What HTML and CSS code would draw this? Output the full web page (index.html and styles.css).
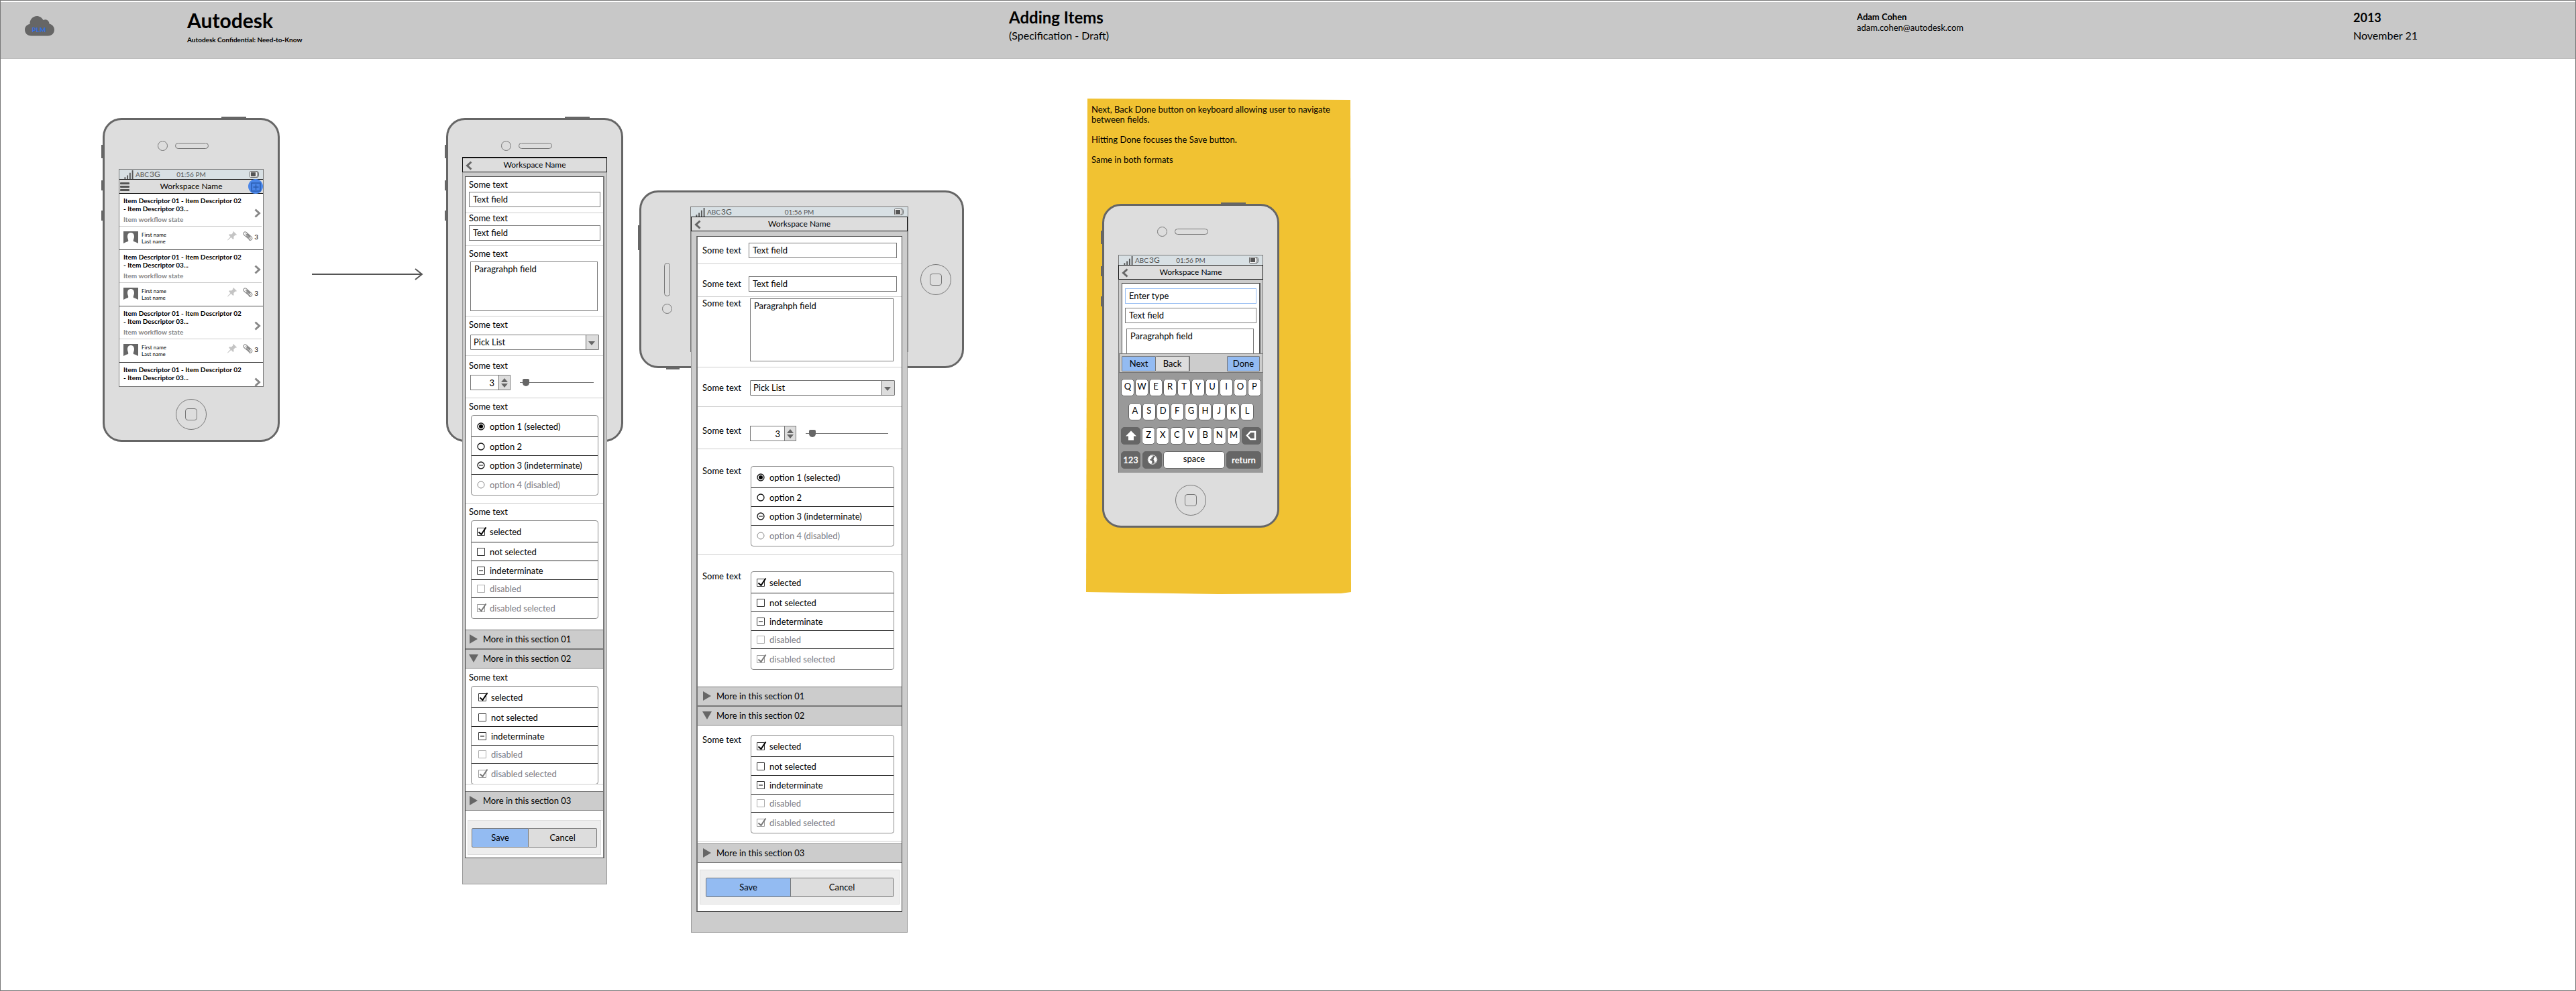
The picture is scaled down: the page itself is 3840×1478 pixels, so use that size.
FILE: index.html
```html
<!DOCTYPE html>
<html lang="en">
<head>
<meta charset="utf-8">
<title>Adding Items</title>
<link rel="stylesheet" href="styles.css">
</head>
<body>
<svg class="defs" aria-hidden="true">
  <symbol id="signal" viewBox="0 0 16 15"><path d="M1 12h2v3H1zM5 9h2v6H5zM9 5h2v10H9zM13 1h2v14h-2z" fill="#555"/></symbol>
  <symbol id="battery" viewBox="0 0 14 10"><path d="M1.500.5h7.500a3 4.500 0 0 1 0 9h-7.500a1 1 0 0 1-1-1v-7a1 1 0 0 1 1-1z" fill="#eee" stroke="#666"/><path d="M10 .5h1a2.500 4.500 0 0 1 0 9h-1" fill="none" stroke="#666"/><path d="M2 2h7v6H2z" fill="#555"/></symbol>
  <symbol id="back" viewBox="0 0 10 14"><path d="M8.500 1.500 2.500 7l6 5.500" fill="none" stroke="#666" stroke-width="3"/></symbol>
  <symbol id="next" viewBox="0 0 10 14"><path d="M1.500 1.500 7.500 7l-6 5.500" fill="none" stroke="#888" stroke-width="3"/></symbol>
  <symbol id="avatar" viewBox="0 0 22 18"><path d="M0 0h22v18l-4-2-3-1c-1-2 1-4 1-7 0-4-2-6-5-6S6 4 6 8c0 3 2 5 1 7l-3 1-4 2z" fill="#666"/></symbol>
  <symbol id="pin" viewBox="0 0 14 14"><path d="M9 0l5 5-1 .8-1.300-.3-2.400 2.600.2 2.900-1.200 1L5.500 9 .5 13.500 0 13l4.500-5L2 5.500l1-1.200 3 .2 2.500-2.400L8 1z" fill="#c4c4c4"/></symbol>
  <symbol id="clip" viewBox="0 0 15 14"><path d="M4 3.500l6.500 5.500c1.600 1.400-.3 3.500-1.900 2.200L2 5.500C-.6 3.200 2.400-.6 5.100 1.500l7.400 6.300c3.300 3-.4 7-3.500 4.700M5.200 6.500l4 3.500M6 3.700l5 4.300" fill="none" stroke="#888" stroke-width="1.100"/></symbol>
  <symbol id="closed" viewBox="0 0 14 14"><path d="M1 0l12 7-12 7z" fill="#666"/></symbol>
  <symbol id="open" viewBox="0 0 14 14"><path d="M0 1h14L7 13z" fill="#666"/></symbol>
  <symbol id="steps" viewBox="0 0 10 14"><path d="M5 0l5 6H0zM5 14l5-6H0z" fill="#666"/></symbol>
</svg>

<header class="banner">
  <svg class="logo" viewBox="0 0 44 30" role="img" aria-label="PLM cloud">
    <path d="M10 29.500C4 29.500 0 25.500 0 20.500c0-4.500 3-8 7.500-8.500C7 5 12 0 18 0c4 0 7.500 2.300 9.500 6 4-2.300 9 .5 9 5.500 4.500 1 7.500 4.500 7.500 9 0 5-4 9-9.500 9z" fill="#666"/>
    <text x="21" y="24" text-anchor="middle" class="logo-text">PLM</text>
  </svg>
  <div>
    <p class="brand">Autodesk</p>
    <p class="confidential">Autodesk Confidential: Need-to-Know</p>
  </div>
  <div>
    <h1 class="title">Adding Items</h1>
    <p class="subtitle">(Specification - Draft)</p>
  </div>
  <div class="author">
    <p class="name">Adam Cohen</p>
    <p>adam.cohen@autodesk.com</p>
  </div>
  <div>
    <p class="year">2013</p>
    <p class="subtitle">November 21</p>
  </div>
</header>

<main class="board">
  <section class="phone phone-list">
    <div class="ear"><i class="camera"></i><i class="speaker"></i></div>
    <div class="screen">
      <div class="status"><span class="carrier"><svg class="signal"><use href="#signal"/></svg>ABC<b class="net">3G</b></span><span>01:56 PM</span><svg class="battery"><use href="#battery"/></svg></div>
      <div class="bar">
        <button class="menu" aria-label="Menu"><i></i><i></i><i></i></button>
        <h2 class="bar-title">Workspace Name</h2>
        <button class="add" aria-label="Add item"><svg viewBox="0 0 22 22"><circle cx="11" cy="11" r="11" fill="#4a86e8"/><path d="M5 6h13v12H5zM11.500 8v8M7.500 12h8" fill="none" stroke="#2a5cae" stroke-width="1.500"/></svg></button>
      </div>
      <ul class="items">
        <li class="item">
          <div class="item-head"><div><h3 class="item-title">Item Descriptor 01 - Item Descriptor 02<br>- Item Descriptor 03...</h3><p class="state">Item workflow state</p></div><svg class="chev"><use href="#next"/></svg></div>
          <div class="item-foot"><svg class="avatar"><use href="#avatar"/></svg><p class="person">First name<br>Last name</p><svg class="pin"><use href="#pin"/></svg><svg class="clip"><use href="#clip"/></svg><span class="count">3</span></div>
        </li>
        <li class="item">
          <div class="item-head"><div><h3 class="item-title">Item Descriptor 01 - Item Descriptor 02<br>- Item Descriptor 03...</h3><p class="state">Item workflow state</p></div><svg class="chev"><use href="#next"/></svg></div>
          <div class="item-foot"><svg class="avatar"><use href="#avatar"/></svg><p class="person">First name<br>Last name</p><svg class="pin"><use href="#pin"/></svg><svg class="clip"><use href="#clip"/></svg><span class="count">3</span></div>
        </li>
        <li class="item">
          <div class="item-head"><div><h3 class="item-title">Item Descriptor 01 - Item Descriptor 02<br>- Item Descriptor 03...</h3><p class="state">Item workflow state</p></div><svg class="chev"><use href="#next"/></svg></div>
          <div class="item-foot"><svg class="avatar"><use href="#avatar"/></svg><p class="person">First name<br>Last name</p><svg class="pin"><use href="#pin"/></svg><svg class="clip"><use href="#clip"/></svg><span class="count">3</span></div>
        </li>
        <li class="item">
          <div class="item-head"><div><h3 class="item-title">Item Descriptor 01 - Item Descriptor 02<br>- Item Descriptor 03...</h3></div><svg class="chev"><use href="#next"/></svg></div>
        </li>
      </ul>
    </div>
    <div class="home"></div>
    <i class="side power"></i><i class="side mute"></i><i class="side up"></i><i class="side down"></i>
  </section>

  <svg class="arrow" viewBox="0 0 166 18" aria-hidden="true"><path d="M0 9h164M154 1l10 8-10 8" fill="none" stroke="#555" stroke-width="2"/></svg>

  <section class="phone phone-form">
    <div class="ear"><i class="camera"></i><i class="speaker"></i></div>
    <div class="panel">
      <div class="bar"><button class="back" aria-label="Back"><svg><use href="#back"/></svg></button><h2 class="bar-title">Workspace Name</h2></div>
      <form class="card">
        <div class="field first"><label for="p1">Some text</label><input class="text" id="p1" value="Text field"></div>
        <div class="field second"><label for="p2">Some text</label><input class="text" id="p2" value="Text field"></div>
        <div class="field para"><label for="p3">Some text</label><textarea class="area" id="p3">Paragrahph field</textarea></div>
        <div class="field pick"><label for="p4">Some text</label><select class="select" id="p4"><option>Pick List</option></select></div>
        <div class="field amount"><label for="p5">Some text</label><div class="number"><input type="text" inputmode="numeric" class="spin" id="p5" value="3"><button type="button" class="step" aria-label="Step"><svg><use href="#steps"/></svg></button><input type="range" class="range" value="4" aria-label="Amount"></div></div>
        <div class="field radios"><span>Some text</span>
          <div class="group">
            <label><input type="radio" name="pr" checked>option 1 (selected)</label>
            <label><input type="radio" name="pr">option 2</label>
            <label><input type="radio" name="pr" class="mixed">option 3 (indeterminate)</label>
            <label class="off"><input type="radio" name="pr" disabled>option 4 (disabled)</label>
          </div></div>
        <div class="field checks"><span>Some text</span>
          <div class="group">
            <label><input type="checkbox" checked>selected</label>
            <label><input type="checkbox">not selected</label>
            <label><input type="checkbox" class="mixed">indeterminate</label>
            <label class="off"><input type="checkbox" disabled>disabled</label>
            <label class="off"><input type="checkbox" checked disabled>disabled selected</label>
          </div></div>
        <button type="button" class="section"><svg><use href="#closed"/></svg>More in this section 01</button>
        <button type="button" class="section"><svg><use href="#open"/></svg>More in this section 02</button>
        <div class="field more"><span>Some text</span>
          <div class="group inset">
            <label><input type="checkbox" checked>selected</label>
            <label><input type="checkbox">not selected</label>
            <label><input type="checkbox" class="mixed">indeterminate</label>
            <label class="off"><input type="checkbox" disabled>disabled</label>
            <label class="off"><input type="checkbox" checked disabled>disabled selected</label>
          </div></div>
        <button type="button" class="section"><svg><use href="#closed"/></svg>More in this section 03</button>
        <div class="actions"><button type="button" class="save">Save</button><button type="button" class="cancel">Cancel</button></div>
      </form>
    </div>
    <i class="side power"></i><i class="side mute"></i><i class="side up"></i><i class="side down"></i>
  </section>

  <section class="phone landscape">
    <div class="ear"><i class="speaker"></i><i class="camera"></i></div>
    <div class="screen">
      <div class="status"><span class="carrier"><svg class="signal"><use href="#signal"/></svg>ABC<b class="net">3G</b></span><span>01:56 PM</span><svg class="battery"><use href="#battery"/></svg></div>
      <div class="panel">
        <div class="bar"><button class="back" aria-label="Back"><svg><use href="#back"/></svg></button><h2 class="bar-title">Workspace Name</h2></div>
        <form class="card">
          <div class="field first"><label for="w1">Some text</label><input class="text" id="w1" value="Text field"></div>
          <div class="field second"><label for="w2">Some text</label><input class="text" id="w2" value="Text field"></div>
          <div class="field para"><label for="w3">Some text</label><textarea class="area" id="w3">Paragrahph field</textarea></div>
          <div class="field pick"><label for="w4">Some text</label><select class="select" id="w4"><option>Pick List</option></select></div>
          <div class="field amount"><label for="w5">Some text</label><div class="number"><input type="text" inputmode="numeric" class="spin" id="w5" value="3"><button type="button" class="step" aria-label="Step"><svg><use href="#steps"/></svg></button><input type="range" class="range" value="4" aria-label="Amount"></div></div>
          <div class="field radios"><span>Some text</span>
            <div class="group">
              <label><input type="radio" name="wr" checked>option 1 (selected)</label>
              <label><input type="radio" name="wr">option 2</label>
              <label><input type="radio" name="wr" class="mixed">option 3 (indeterminate)</label>
              <label class="off"><input type="radio" name="wr" disabled>option 4 (disabled)</label>
            </div></div>
          <div class="field checks"><span>Some text</span>
            <div class="group">
              <label><input type="checkbox" checked>selected</label>
              <label><input type="checkbox">not selected</label>
              <label><input type="checkbox" class="mixed">indeterminate</label>
              <label class="off"><input type="checkbox" disabled>disabled</label>
              <label class="off"><input type="checkbox" checked disabled>disabled selected</label>
            </div></div>
          <button type="button" class="section"><svg><use href="#closed"/></svg>More in this section 01</button>
          <button type="button" class="section"><svg><use href="#open"/></svg>More in this section 02</button>
          <div class="field more"><span>Some text</span>
            <div class="group">
              <label><input type="checkbox" checked>selected</label>
              <label><input type="checkbox">not selected</label>
              <label><input type="checkbox" class="mixed">indeterminate</label>
              <label class="off"><input type="checkbox" disabled>disabled</label>
              <label class="off"><input type="checkbox" checked disabled>disabled selected</label>
            </div></div>
          <button type="button" class="section"><svg><use href="#closed"/></svg>More in this section 03</button>
          <div class="actions"><button type="button" class="save">Save</button><button type="button" class="cancel">Cancel</button></div>
        </form>
      </div>
    </div>
    <div class="home"></div>
    <i class="side l-power"></i><i class="side l-mute"></i>
  </section>

  <aside class="sticky">
    <p>Next, Back Done button on keyboard allowing user to navigate between fields.</p>
    <p>Hitting Done focuses the Save button.</p>
    <p>Same in both formats</p>
    <section class="phone phone-keys">
      <div class="ear"><i class="camera"></i><i class="speaker"></i></div>
      <div class="screen">
        <div class="status"><span class="carrier"><svg class="signal"><use href="#signal"/></svg>ABC<b class="net">3G</b></span><span>01:56 PM</span><svg class="battery"><use href="#battery"/></svg></div>
        <div class="bar"><button class="back" aria-label="Back"><svg><use href="#back"/></svg></button><h2 class="bar-title">Workspace Name</h2></div>
        <form class="mini">
          <div class="mini-card">
            <input class="text focus" value="Enter type" aria-label="Type">
            <input class="text" value="Text field" aria-label="Text">
            <textarea class="area" aria-label="Paragraph">Paragrahph field</textarea>
          </div>
        </form>
        <div class="tools"><button class="save">Next</button><button class="cancel">Back</button><button class="save done">Done</button></div>
        <div class="keys">
          <div class="row"><button>Q</button><button>W</button><button>E</button><button>R</button><button>T</button><button>Y</button><button>U</button><button>I</button><button>O</button><button>P</button></div>
          <div class="row mid"><button>A</button><button>S</button><button>D</button><button>F</button><button>G</button><button>H</button><button>J</button><button>K</button><button>L</button></div>
          <div class="row"><button class="dark" aria-label="Shift"><svg viewBox="0 0 16 14"><path d="M8 0l8 8h-4v6H4V8H0z" fill="#fff"/></svg></button><button>Z</button><button>X</button><button>C</button><button>V</button><button>B</button><button>N</button><button>M</button><button class="dark" aria-label="Delete"><svg viewBox="0 0 16 14"><path d="M14 1.500H7L2 7l5 5.500h7z" fill="none" stroke="#fff" stroke-width="2.500"/></svg></button></div>
          <div class="row"><button class="dark">123</button><button class="dark" aria-label="Language"><svg viewBox="0 0 16 16"><circle cx="8" cy="8" r="7.200" fill="#666" stroke="#fff"/><path d="M2 4.500L5 1.500h4l-1 2.500-2 1 .5 2h-2l-1 1.500 3.500 1.500.5 2-1.500 3-3-1.500L1.500 9zM9.500 8l1-3.500 2-1 1.500 2 .5 3.500-2 3.500-1.700.5.200-3z" fill="#fff"/></svg></button><button class="space">space</button><button class="dark return">return</button></div>
        </div>
      </div>
      <div class="home"></div>
      <i class="side power"></i><i class="side mute"></i><i class="side up"></i><i class="side down"></i>
    </section>
  </aside>
</main>
</body>
</html>
```
FILE: styles.css
```css
* { box-sizing: border-box; margin: 0; padding: 0; }

body {
  display: flex;
  flex-direction: column;
  min-height: 100vh;
  border: 1px solid #777;
  background: #fff;
  color: #000;
  font: 13px/16px Lato, "Liberation Sans", sans-serif;
}

button, input, select, textarea { font: inherit; color: inherit; border-radius: 0; }
button { border: 0; background: none; }
svg { display: block; flex: none; }
i { display: block; }
ul { list-style: none; }
.defs { position: absolute; width: 0; height: 0; }

/* Banner */
.banner {
  display: grid;
  grid-template-columns: 278px 1225fr 1264fr 740fr 331fr;
  height: 85px;
  margin-top: 2px;
  padding-top: 12px;
  border-bottom: 1px solid #bbb;
  background: #c8c8c8;
}
.logo { width: 44px; height: 30px; margin: 9px 0 0 36px; }
.logo-text { font: 700 10px Lato, sans-serif; fill: #2f6fe4; }
.brand { font-size: 30px; line-height: 30px; font-weight: 700; }
.confidential { margin-top: 8px; font-size: 10px; line-height: 12px; font-weight: 700; }
.title { font-size: 24px; line-height: 22px; }
.subtitle { font-size: 16px; line-height: 20px; margin-top: 6px; }
.author { padding-top: 2px; }
.name { font-weight: 700; }
.year { font-size: 18px; line-height: 22px; font-weight: 700; }

/* Board */
.board { flex: 1; display: flex; align-items: flex-start; padding-left: 152px; }

.phone {
  position: relative;
  flex: none;
  display: flex;
  flex-direction: column;
  align-items: center;
  width: 264px;
  height: 483px;
  margin-top: 88px;
  border: 3px solid #666;
  border-radius: 28px;
  background: #ddd;
}
.ear { display: flex; align-items: center; align-self: flex-start; gap: 11px; margin: 31px 0 0 79px; }
.camera { width: 15px; height: 15px; border: 1px solid #777; border-radius: 50%; }
.speaker { width: 50px; height: 9px; border: 1px solid #777; border-radius: 5px; }
.home {
  display: flex;
  flex: none;
  width: 46px;
  height: 46px;
  margin-top: 18px;
  border: 1px solid #777;
  border-radius: 50%;
}
.home::before { content: ""; width: 16px; height: 16px; margin: auto; border: 1px solid #777; border-radius: 4px; }
.side { position: absolute; left: -5px; width: 3px; background: #666; }
.power { top: -5px; left: 174px; width: 37px; height: 3px; }
.mute { top: 37px; height: 20px; }
.up { top: 90px; height: 15px; }
.down { top: 135px; height: 15px; }
.l-power { top: 49px; height: 37px; }
.l-mute { left: 37px; bottom: -5px; width: 20px; height: 3px; }

.screen { width: 216px; height: 325px; flex: none; margin-top: 27px; border: 1px solid #777; }
.status {
  display: grid;
  grid-template-columns: 1fr auto 1fr;
  align-items: center;
  height: 14px;
  padding: 0 6px;
  background: #d8e0e4;
  color: #555;
  font-size: 10px;
  line-height: 14px;
}
.carrier { display: flex; }
.signal { width: 16px; height: 14px; margin-right: 2px; }
.net { margin-left: 1px; font-size: 12px; font-weight: 400; }
.battery { width: 14px; height: 10px; justify-self: end; }

.bar {
  position: relative;
  display: flex;
  align-items: center;
  height: 22px;
  border: 1px solid #111;
  background: #ddd;
}
.bar-title { flex: 1; text-align: center; font-size: 12px; line-height: 20px; font-weight: 400; }
.back { position: absolute; left: 4px; top: 4px; }
.back svg { width: 10px; height: 14px; }
.menu { position: absolute; left: 1px; top: 4px; display: grid; gap: 2px; }
.menu i { width: 14px; height: 3px; border-radius: 1px; background: #555; }
.add { position: absolute; right: 0; top: -1px; }
.add svg { width: 22px; height: 22px; }

.arrow { width: 166px; height: 18px; margin: 312px 0 0 48px; }
.phone-form { margin-left: 34px; }
.landscape { margin-left: 24px; }
.sticky { margin-left: 182px; }

/* Item list */
.phone-list .screen { overflow: hidden; background: #fff; }
.phone-list .bar { margin: 0 -1px; }
.item { height: 84px; border-bottom: 1px solid #444; }
.item-head { display: flex; height: 49px; margin-right: 2px; padding: 4px 1px 0 6px; border-bottom: 1px solid #ccc; }
.item:last-child .item-head { border: 0; }
.item-head div { flex: 1; }
.item-title { font-size: 10px; line-height: 12px; white-space: nowrap; }
.state { margin-top: 3px; font-size: 10px; line-height: 14px; font-weight: 700; color: #888; }
.chev { width: 10px; height: 14px; margin-top: 18px; }
.item-foot { display: flex; align-items: flex-start; padding: 7px 7px 0 6px; }
.avatar { width: 22px; height: 18px; }
.person { flex: 1; margin-left: 5px; font-size: 8px; line-height: 10px; }
.pin { width: 14px; height: 14px; margin-right: 9px; }
.clip { width: 15px; height: 14px; }
.count { margin-left: 2px; font-size: 10px; line-height: 16px; }

/* Form */
.panel { width: 216px; flex: none; border: 1px solid #999; border-top: 0; background: #ccc; padding-bottom: 38px; }
.phone-form .panel { margin-top: 9px; }
.panel .bar { height: 23px; margin: 0 -1px; }
.phone-form .bar { border-top-width: 2px; }
.card { display: flex; flex-direction: column; margin: 6px 3px 0; border: 1px solid #444; border-right: 2px solid #777; background: #fff; }
.field { position: relative; display: grid; justify-items: start; padding: 0 0 0 5px; border-bottom: 1px solid #ccc; }
.field > label, .field > span { padding-bottom: 2px; line-height: 14px; }
.text { width: 196px; height: 23px; padding: 0 5px 1px; border: 1px solid #777; background: #fff; outline: 0; }
.area { width: 190px; height: 74px; margin-left: 2px; padding: 2px 5px; border: 1px solid #777; background: #fff; resize: none; display: block; }
.select {
  width: 192px;
  height: 23px;
  margin-left: 2px;
  padding: 0 4px 1px;
  border: 1px solid #777;
  border-radius: 1px;
  appearance: none;
  background: #fff url("data:image/svg+xml,%3Csvg xmlns='http://www.w3.org/2000/svg' width='19' height='21'%3E%3Cpath d='M0 0h19v21H0z' fill='%23ddd'/%3E%3Cpath d='M0 0h1v21H0zM4 9h10l-5 6z' fill='%23666'/%3E%3C/svg%3E") no-repeat right center;
}
.number { display: flex; align-items: center; margin-left: 2px; }
.spin { width: 43px; height: 23px; padding-right: 6px; border: 1px solid #777; text-align: right; }
.step { display: flex; align-items: center; justify-content: center; width: 18px; height: 23px; margin-left: -1px; border: 1px solid #777; background: #ddd; }
.step svg { width: 10px; height: 14px; }
.range { width: 110px; height: 12px; margin-left: 14px; appearance: none; background: linear-gradient(#777, #777) no-repeat center / 100% 1px; }
.range::-webkit-slider-thumb { appearance: none; width: 10px; height: 11px; border-radius: 2px 2px 5px 5px; background: #666; }

.group { width: 190px; margin-left: 3px; border: 1px solid #888; border-radius: 4px; background: #fff; }
.group label { display: flex; align-items: center; gap: 4px; height: 28px; padding-left: 8px; border-bottom: 1px solid #222; }
.group label:first-child { height: 32px; }
.group label:nth-child(4) { height: 27px; }
.group label:last-child { height: 30px; border: 0; }
.group.inset label { padding-left: 10px; }
.group .off { color: #7b7b84; }
.group input { width: 15px; height: 14px; appearance: none; background: no-repeat left center; }
.group [type=radio] { background-image: url("data:image/svg+xml,%3Csvg xmlns='http://www.w3.org/2000/svg' width='15' height='14'%3E%3Ccircle cx='6' cy='7' r='5' fill='none' stroke='%23111' stroke-width='1.300'/%3E%3C/svg%3E"); }
.group [type=radio]:checked { background-image: url("data:image/svg+xml,%3Csvg xmlns='http://www.w3.org/2000/svg' width='15' height='14'%3E%3Ccircle cx='6' cy='7' r='5' fill='none' stroke='%23111' stroke-width='1.300'/%3E%3Ccircle cx='6' cy='7' r='3'/%3E%3C/svg%3E"); }
.group [type=radio].mixed { background-image: url("data:image/svg+xml,%3Csvg xmlns='http://www.w3.org/2000/svg' width='15' height='14'%3E%3Ccircle cx='6' cy='7' r='5' fill='none' stroke='%23111' stroke-width='1.300'/%3E%3Cpath d='M3 6.500h6v1H3z'/%3E%3C/svg%3E"); }
.group [type=radio]:disabled { background-image: url("data:image/svg+xml,%3Csvg xmlns='http://www.w3.org/2000/svg' width='15' height='14'%3E%3Ccircle cx='6' cy='7' r='5' fill='none' stroke='%23888'/%3E%3C/svg%3E"); }
.group [type=checkbox] { background-image: url("data:image/svg+xml,%3Csvg xmlns='http://www.w3.org/2000/svg' width='15' height='14'%3E%3Cpath d='M.5 1.500h11v11H.5z' fill='none' stroke='%23333'/%3E%3C/svg%3E"); }
.group [type=checkbox]:checked { background-image: url("data:image/svg+xml,%3Csvg xmlns='http://www.w3.org/2000/svg' width='15' height='14'%3E%3Cpath d='M.5 1.500h11v11H.5z' fill='none' stroke='%23333'/%3E%3Cpath d='M2.500 7.500l4 3.500 7-10.500' fill='none' stroke='%23000' stroke-width='2'/%3E%3C/svg%3E"); }
.group [type=checkbox].mixed { background-image: url("data:image/svg+xml,%3Csvg xmlns='http://www.w3.org/2000/svg' width='15' height='14'%3E%3Cpath d='M.5 1.500h11v11H.5z' fill='none' stroke='%23333'/%3E%3Cpath d='M3 6.500h6v1H3z'/%3E%3C/svg%3E"); }
.group [type=checkbox]:disabled { background-image: url("data:image/svg+xml,%3Csvg xmlns='http://www.w3.org/2000/svg' width='15' height='14'%3E%3Cpath d='M.5 1.500h11v11H.5z' fill='none' stroke='%23aaa'/%3E%3C/svg%3E"); }
.group [type=checkbox]:checked:disabled { background-image: url("data:image/svg+xml,%3Csvg xmlns='http://www.w3.org/2000/svg' width='15' height='14'%3E%3Cpath d='M.5 1.500h11v11H.5z' fill='none' stroke='%23999'/%3E%3Cpath d='M2.500 7.500l4 3.500 7-10.500' fill='none' stroke='%23777' stroke-width='2'/%3E%3C/svg%3E"); }

.first { padding-top: 4px; padding-bottom: 8px; row-gap: 2px; }
.second { padding-bottom: 7px; row-gap: 2px; }
.para { padding-top: 4px; padding-bottom: 7px; row-gap: 3px; }
.pick { padding-top: 5px; padding-bottom: 8px; row-gap: 6px; }
.amount { padding-top: 7px; padding-bottom: 11px; row-gap: 5px; }
.radios { padding-top: 5px; padding-bottom: 11px; row-gap: 4px; }
.checks { padding-top: 5px; padding-bottom: 16px; row-gap: 4px; border: 0; }
.more { padding-top: 6px; padding-bottom: 10px; row-gap: 4px; border: 0; }
.more::after { content: ""; position: absolute; left: 0; right: 0; bottom: 10px; height: 1px; background: #ccc; }

.section { display: flex; align-items: center; gap: 7px; height: 29px; padding: 0 0 1px 5px; border: 1px solid #777; border-width: 1px 0; background: #ccc; text-align: left; }
.section svg { width: 14px; height: 14px; }
.actions { display: flex; height: 52px; margin: 14px 3px 4px; padding: 11px 5px 10px; border: 1px solid #ddd; background: #eee; }
.save, .cancel { padding-bottom: 2px; border: 1px solid #777; background: #ddd; }
.save { background: #93bbf2; }
.actions .save { flex: 85; border-radius: 2px 0 0 2px; }
.actions .cancel { flex: 103; border-left: 0; border-radius: 0 2px 2px 0; }

/* Landscape form: labels beside their controls */
.landscape { flex-direction: row; align-items: flex-start; width: 484px; height: 265px; margin-top: 196px; }
.landscape .ear { flex-direction: column; margin: 105px 0 0 31px; }
.landscape .ear .speaker { width: 9px; height: 50px; }
.landscape .screen { width: 325px; height: 217px; margin: 21px 0 0 27px; }
.landscape .home { margin: 107px 0 0 18px; }
.landscape .panel { width: 323px; padding-bottom: 30px; }
.landscape .panel .bar { height: 22px; }
.landscape .card { margin: 7px 7px 0; border-left: 2px solid #777; border-right: 1px solid #444; }
.landscape .field { grid-template-columns: 69px 1fr; align-items: start; padding-left: 7px; }
.landscape .first { padding-top: 9px; padding-bottom: 8px; align-items: center; }
.landscape .second { padding-top: 18px; align-items: center; }
.landscape .para { padding-top: 2px; padding-bottom: 8px; }
.landscape .pick { padding-top: 19px; padding-bottom: 16px; align-items: center; }
.landscape .amount { padding-top: 28px; }
.landscape .radios { padding-top: 25px; }
.landscape .checks { padding-top: 25px; padding-bottom: 25px; }
.landscape .more { padding-top: 14px; padding-bottom: 15px; }
.landscape .more::after { bottom: 3px; }
.landscape .text { width: 221px; }
.landscape .area { width: 214px; height: 94px; }
.landscape .select { width: 216px; }
.landscape .group { width: 214px; }
.landscape .spin { width: 52px; }
.landscape .range { width: 123px; }
.landscape .section { padding-left: 7px; }
.landscape .actions { margin: 10px 3px; padding: 11px 8px 10px; }
.landscape .actions .save { flex: 126; }
.landscape .actions .cancel { flex: 153; }

/* Sticky note */
.sticky {
  width: 395px;
  height: 739px;
  margin-top: 59px;
  padding: 9px 8px 0;
  background: #f1c232;
  clip-path: polygon(2px 0, 394px 2px, 100% 736px, 380px 738px, 50% 100%, 0 736px);
}
.sticky p { margin-bottom: 15px; line-height: 15px; }
.sticky .phone { margin: 58px 0 0 16px; }
.phone-keys .screen { display: flex; flex-direction: column; background: #ccc; border-bottom: 0; }
.phone-keys .bar { margin: 0 -1px; }
.mini { display: flex; height: 110px; padding: 5px 3px 0 4px; overflow: hidden; }
.mini-card { display: grid; align-content: start; width: 208px; padding: 7px 4px 0; border: 1px solid #444; border-bottom: 0; border-right: 2px solid #555; background: #fff; }
.mini .text + .text { margin-top: 6px; }
.mini .area { margin-top: 8px; }
.mini .focus { border-color: #93bbf2; }
.tools { display: flex; height: 29px; margin: 0 -1px 0 0; padding: 3px 4px 0 3px; border: 1px solid #777; background: #ccc; }
.tools .save, .tools .cancel { width: 51px; height: 23px; border-radius: 1px; line-height: 20px; }
.tools .cancel { border-left: 0; border-right-width: 2px; }
.tools .done { width: 49px; margin-left: auto; }
.keys { display: grid; gap: 10px; align-content: start; height: 150px; margin-right: -1px; padding: 9px 3px 0; background: #999; }
.row { display: flex; gap: 1px; height: 26px; }
.mid { margin: 0 11px; }
.row button { flex: 1; border: 1px solid #666; border-radius: 5px; background: #fff; line-height: 20px; padding-bottom: 3px; }
.row .dark { display: flex; align-items: center; justify-content: center; flex: none; width: 29px; margin: 0 1px; padding: 0; background: #666; color: #fff; font-weight: 700; }
.row .dark:first-child { margin-left: 0; }
.row .dark:last-child { margin-right: 0; }
.row .return { width: 52px; }
.dark svg { width: 16px; height: 15px; }
```
